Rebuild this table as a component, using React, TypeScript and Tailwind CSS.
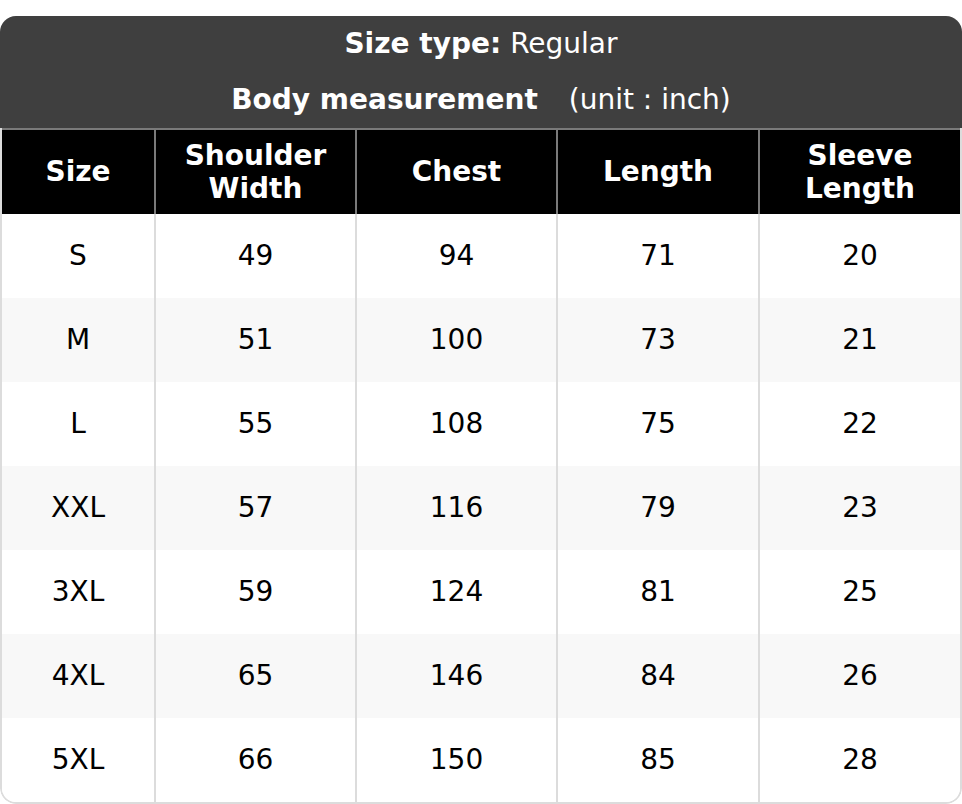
const columns = ["Size", "Shoulder Width", "Chest", "Length", "Sleeve Length"];

const rows = [
  ["S", "49", "94", "71", "20"],
  ["M", "51", "100", "73", "21"],
  ["L", "55", "108", "75", "22"],
  ["XXL", "57", "116", "79", "23"],
  ["3XL", "59", "124", "81", "25"],
  ["4XL", "65", "146", "84", "26"],
  ["5XL", "66", "150", "85", "28"],
];

const gridCols = "grid grid-cols-[152px_201px_201px_202px_1fr]";

export default function App() {
  return (
    <div
      className="min-h-screen bg-white pt-[16px] text-[28px] leading-[1.18]"
      style={{ fontFamily: '"DejaVu Sans", "Noto Sans", sans-serif' }}
    >
      <div className="w-[962px] rounded-2xl overflow-hidden">
        {/* TITLE */}
        <div className="bg-[#3f3f3f] text-white text-center">
          <div className="h-[56px] flex items-center justify-center">
            <span className="font-bold">Size type:</span>
            <span className="ml-[9px]">Regular</span>
          </div>
          <div className="h-[56px] flex items-center justify-center">
            <span className="font-bold">Body measurement</span>
            <span className="ml-[31px]">(unit : inch)</span>
          </div>
        </div>

        <div className="border-x-2 border-b-2 border-[#dcdcdc] rounded-b-2xl overflow-hidden">
          {/* HEADER ROW */}
          <div className={`${gridCols} bg-black text-white font-bold border-t-2 border-[#7a7a7a]`}>
            {columns.map((col, i) => (
              <div
                key={col}
                className={`h-[84px] flex items-center justify-center text-center px-2 ${
                  i > 0 ? "border-l-2 border-[#7a7a7a]" : ""
                }`}
              >
                {col === "Shoulder Width" ? (
                  <span>
                    Shoulder
                    <br />
                    Width
                  </span>
                ) : col === "Sleeve Length" ? (
                  <span>
                    Sleeve
                    <br />
                    Length
                  </span>
                ) : (
                  col
                )}
              </div>
            ))}
          </div>

          {/* DATA ROWS */}
          {rows.map((row, r) => (
            <div
              key={row[0]}
              className={`${gridCols} text-black ${r % 2 === 1 ? "bg-[#f8f8f8]" : "bg-white"}`}
            >
              {row.map((cell, i) => (
                <div
                  key={i}
                  className={`h-[84px] flex items-center justify-center ${
                    i > 0 ? "border-l-2 border-[#dcdcdc]" : ""
                  }`}
                >
                  {cell}
                </div>
              ))}
            </div>
          ))}
        </div>
      </div>
    </div>
  );
}
